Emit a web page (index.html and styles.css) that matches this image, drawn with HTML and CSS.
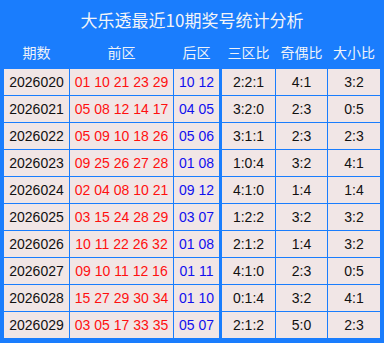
FILE: index.html
```html
<!DOCTYPE html>
<html>
<head>
<meta charset="utf-8">
<link rel="stylesheet" href="styles.css">
</head>
<body>
<div class="panel">
  <div class="title">大乐透最近10期奖号统计分析</div>
  <div class="grid">
    <div class="hd">期数</div><div class="hd">前区</div><div class="hd">后区</div><div class="hd c4">三区比</div><div class="hd">奇偶比</div><div class="hd">大小比</div>

    <div class="cell">2026020</div><div class="cell red">01 10 21 23 29</div><div class="cell blue">10 12</div><div class="cell c4">2:2:1</div><div class="cell">4:1</div><div class="cell">3:2</div>
    <div class="cell">2026021</div><div class="cell red">05 08 12 14 17</div><div class="cell blue">04 05</div><div class="cell c4">3:2:0</div><div class="cell">2:3</div><div class="cell">0:5</div>
    <div class="cell">2026022</div><div class="cell red">05 09 10 18 26</div><div class="cell blue">05 06</div><div class="cell c4">3:1:1</div><div class="cell">2:3</div><div class="cell">2:3</div>
    <div class="cell">2026023</div><div class="cell red">09 25 26 27 28</div><div class="cell blue">01 08</div><div class="cell c4">1:0:4</div><div class="cell">3:2</div><div class="cell">4:1</div>
    <div class="cell">2026024</div><div class="cell red">02 04 08 10 21</div><div class="cell blue">09 12</div><div class="cell c4">4:1:0</div><div class="cell">1:4</div><div class="cell">1:4</div>
    <div class="cell">2026025</div><div class="cell red">03 15 24 28 29</div><div class="cell blue">03 07</div><div class="cell c4">1:2:2</div><div class="cell">3:2</div><div class="cell">3:2</div>
    <div class="cell">2026026</div><div class="cell red">10 11 22 26 32</div><div class="cell blue">01 08</div><div class="cell c4">2:1:2</div><div class="cell">1:4</div><div class="cell">3:2</div>
    <div class="cell">2026027</div><div class="cell red">09 10 11 12 16</div><div class="cell blue">01 11</div><div class="cell c4">4:1:0</div><div class="cell">2:3</div><div class="cell">0:5</div>
    <div class="cell">2026028</div><div class="cell red">15 27 29 30 34</div><div class="cell blue">01 10</div><div class="cell c4">0:1:4</div><div class="cell">3:2</div><div class="cell">4:1</div>
    <div class="cell">2026029</div><div class="cell red">03 05 17 33 35</div><div class="cell blue">05 07</div><div class="cell c4">2:1:2</div><div class="cell">5:0</div><div class="cell">2:3</div>
  </div>
</div>
</body>
</html>
```

FILE: styles.css
```css
html, body {
  margin: 0;
  padding: 0;
}
body {
  font-family: "Liberation Sans", "Noto Sans CJK SC", sans-serif;
}
.panel {
  width: 384px;
  height: 343px;
  box-sizing: border-box;
  background: #1a7dfd;
  padding: 0 4px 5px 4px;
}
.title {
  height: 36px;
  line-height: 40px;
  text-align: center;
  color: #f2f4f8;
  font-size: 17px;
  font-family: "Noto Sans CJK SC", sans-serif;
}
.grid {
  display: grid;
  grid-template-columns: 65px 103px 45px 55px 51px 52px;
  grid-template-rows: 32px repeat(10, 26px);
  gap: 1px;
}
.hd {
  display: flex;
  align-items: center;
  justify-content: center;
  color: #eef2f9;
  font-size: 14px;
  font-family: "Noto Sans CJK SC", sans-serif;
}
.cell {
  display: flex;
  align-items: center;
  justify-content: center;
  background: #f1e6e6;
  color: #111;
  font-size: 14px;
}
.c4 {
  margin-left: 2px;
}
.red {
  color: #ff1010;
}
.blue {
  color: #1010ee;
}
```
